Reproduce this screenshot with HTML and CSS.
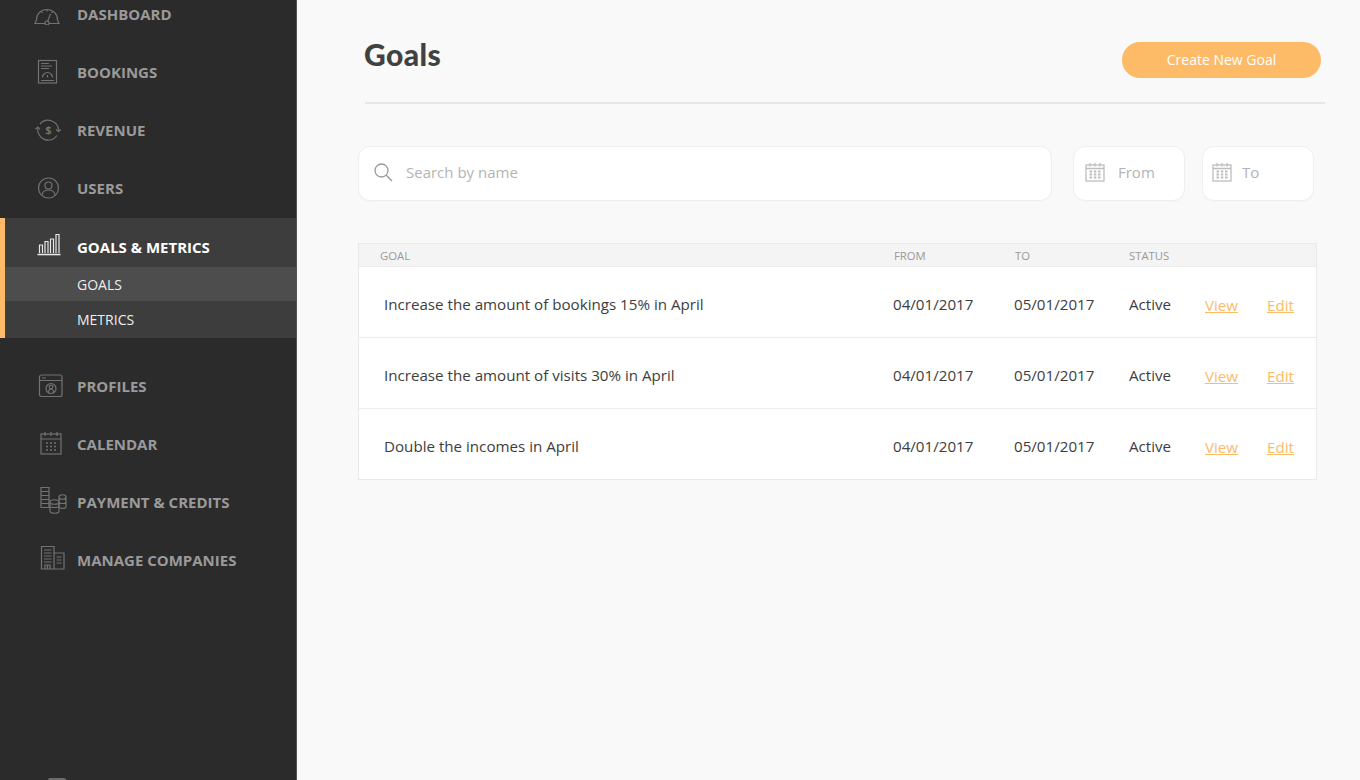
FILE: index.html
```html
<!DOCTYPE html>
<html lang="en">
<head>
<meta charset="utf-8">
<title>Goals</title>
<link rel="stylesheet" href="styles.css">
</head>
<body>
<div class="app">
  <aside class="sidebar">
    <nav class="nav">
      <a class="nav-item"><span class="ico"><svg width="38" height="22" viewBox="0 0 38 22"><path d="M7.500 17C7.500 10.500 12 6.500 18 6.500S28.500 10.500 28.500 17"/><path d="M7.500 17L6 20.500h10M20 20.500H30L28.500 17"/><path d="M18 6.500v2M12.500 8.500l1 1.500M23.500 8.500l-1 1.500"/><path d="M21.500 11L18.500 18.500"/><circle cx="18" cy="20" r="2"/></svg></span><span>DASHBOARD</span></a>
      <a class="nav-item"><span class="ico"><svg width="38" height="26" viewBox="0 0 38 26"><rect x="9.500" y="1.500" width="18" height="22.500"/><path d="M12 4.500h8M12 7h11M12 9.500h8M12 21.500h13"/><path d="M13.500 18.500a5 5 0 0 1 10 0M18.500 16v2.500"/></svg></span><span>BOOKINGS</span></a>
      <a class="nav-item"><span class="ico"><svg width="38" height="24" viewBox="0 0 38 24"><path d="M11 6A10.500 10.500 0 0 1 29.500 13.500M28 17.500A10.500 10.500 0 0 1 9 9.500"/><path d="M6.500 11l2.500-2 2 2.500M27 11.500l2.500 2 2.500-2"/><text class="ico-txt" x="19.500" y="16">$</text></svg></span><span>REVENUE</span></a>
      <a class="nav-item"><span class="ico"><svg width="38" height="24" viewBox="0 0 38 24"><circle cx="19.500" cy="12" r="10"/><circle cx="19.500" cy="9.500" r="3.500"/><path d="M13 19c.5-3.500 3-5 6.500-5s6 1.500 6.500 5"/></svg></span><span>USERS</span></a>

      <div class="group">
        <a class="nav-item active"><span class="ico"><svg width="38" height="24" viewBox="0 0 38 24"><path class="thick" d="M8.500 21.500h23"/><path d="M10.500 20v-8h3v8M16 20V8.500h3V20M21.500 20V6h3v14M27 20V1.500h3V20"/></svg></span><span>GOALS &amp; METRICS</span></a>
        <a class="sub sub-current">GOALS</a>
        <a class="sub sub-last">METRICS</a>
      </div>

      <a class="nav-item after-group"><span class="ico ico-shift"><svg width="38" height="26" viewBox="0 0 38 26"><rect x="7.500" y="2" width="22.500" height="21.500" rx="2"/><path d="M7.500 7.500H30M10 5h4"/><circle cx="19" cy="15.500" r="5"/><circle cx="19" cy="14" r="1.800"/><path d="M16.500 19c.3-2 1-3 2.500-3s2.200 1 2.500 3"/></svg></span><span>PROFILES</span></a>
      <a class="nav-item"><span class="ico ico-shift"><svg width="38" height="26" viewBox="0 0 38 26"><rect x="9" y="3" width="20" height="20"/><path d="M9 8h20M13 1v4M19 1v4M25 1v4"/><path class="dots" d="M14 12h2M18 12h2M22 12h2M14 15.500h2M18 15.500h2M22 15.500h2M14 19h2M18 19h2M22 19h2"/></svg></span><span>CALENDAR</span></a>
      <a class="nav-item"><span class="ico ico-shift ico-up"><svg width="38" height="30" viewBox="0 0 38 30"><path d="M9 2.500h8v20H9zM9 6.500h8M9 10.500h8M9 14.500h8M9 18.500h8"/><path d="M18 17c0 3 9 3 9 0s-9-3-9 0zM18 17v9c0 3 9 3 9 0v-9M18 21c0 2 9 2 9 0"/><path d="M27 12c0 3 7 3 7 0s-7-3-7 0zM27 12v10c0 1.500 7 2 7 0V12M27 17c0 2 7 2 7 0"/></svg></span><span>PAYMENT &amp; CREDITS</span></a>
      <a class="nav-item"><span class="ico ico-shift ico-up"><svg width="38" height="26" viewBox="0 0 38 26"><path d="M9.500 24V1.500h12.500V24zM22 8h10v16H22z"/><path d="M12 5h7.500M12 8h7.500M12 11h7.500M12 14h7.500M12 17h7.500M24.500 12h5M24.500 15h5M24.500 18h5M13 24v-4h5v4M15.500 20v4"/></svg></span><span>MANAGE COMPANIES</span></a>
    </nav>
    <div class="sidebar-peek"></div>
  </aside>

  <main class="main">
    <header class="head">
      <h1 class="title">Goals</h1>
      <a class="btn">Create New Goal</a>
    </header>

    <section class="filters">
      <div class="field field-search">
        <svg class="field-ico" width="20" height="20" viewBox="0 0 20 20"><circle cx="8.500" cy="8.500" r="6.500"/><path d="M13.300 13.300L19 19"/></svg>
        <span class="placeholder">Search by name</span>
      </div>
      <div class="field field-date field-from">
        <svg class="field-ico cal" width="20" height="20" viewBox="0 0 20 20"><rect x="1" y="3" width="18" height="16"/><path d="M1 6.500h18M5 1v3.500M10 1v3.500M15 1v3.500"/><path class="cal-dots" d="M4.500 9.500h2.500M8.800 9.500h2.500M13 9.500h2.500M4.500 12.500h2.500M8.800 12.500h2.500M13 12.500h2.500M4.500 15.500h2.500M8.800 15.500h2.500M13 15.500h2.500"/></svg>
        <span class="placeholder">From</span>
      </div>
      <div class="field field-date field-to">
        <svg class="field-ico cal" width="20" height="20" viewBox="0 0 20 20"><rect x="1" y="3" width="18" height="16"/><path d="M1 6.500h18M5 1v3.500M10 1v3.500M15 1v3.500"/><path class="cal-dots" d="M4.500 9.500h2.500M8.800 9.500h2.500M13 9.500h2.500M4.500 12.500h2.500M8.800 12.500h2.500M13 12.500h2.500M4.500 15.500h2.500M8.800 15.500h2.500M13 15.500h2.500"/></svg>
        <span class="placeholder">To</span>
      </div>
    </section>

    <section class="table">
      <div class="row row-head">
        <span class="c-goal">GOAL</span><span>FROM</span><span class="c-to">TO</span><span>STATUS</span>
      </div>
      <div class="row row-body">
        <span class="c-goal">Increase the amount of bookings 15% in April</span><span class="c-date">04/01/2017</span><span>05/01/2017</span><span>Active</span><a class="link">View</a><a class="link link-edit">Edit</a>
      </div>
      <div class="row row-body">
        <span class="c-goal">Increase the amount of visits 30% in April</span><span class="c-date">04/01/2017</span><span>05/01/2017</span><span>Active</span><a class="link">View</a><a class="link link-edit">Edit</a>
      </div>
      <div class="row row-body">
        <span class="c-goal">Double the incomes in April</span><span class="c-date">04/01/2017</span><span>05/01/2017</span><span>Active</span><a class="link">View</a><a class="link link-edit">Edit</a>
      </div>
    </section>
  </main>
</div>
</body>
</html>
```
FILE: styles.css
```css
* { box-sizing: border-box; }
html, body { margin: 0; height: 100%; overflow: hidden; }
body { font-family: "Open Sans", "Liberation Sans", sans-serif; background: #f9f9f9; color: #3f3f3f; }
.app { display: flex; height: 780px; width: 1360px; }

.sidebar { width: 297px; flex: none; height: 780px; background: #2b2b2b; border-right: 1px solid #555; overflow: hidden; display: flex; flex-direction: column; justify-content: space-between; }
.nav { margin-top: -15px; display: flex; flex-direction: column; }
.nav-item { height: 58px; display: flex; align-items: center; font-size: 15px; font-weight: 700; color: #9a9a9a; padding-left: 29px; }
.ico { width: 38px; margin-right: 10px; display: flex; justify-content: center; align-items: center; }
.ico svg { display: block; fill: none; stroke: #727272; stroke-width: 1.2; }
.ico-txt { font-family: "Open Sans", sans-serif; font-size: 11px; font-weight: 700; fill: #727272; stroke: none; text-anchor: middle; }
.ico .dots { stroke-width: 1.6; }
.ico-shift svg { transform: translateX(3px); }
.ico-up svg { margin-top: -4px; }

.group { background: #3d3d3d; border-left: 5px solid #fdbb68; margin-top: 1px; height: 120px; display: flex; flex-direction: column; }
.nav-item.active { color: #fff; height: 49px; padding-left: 24px; padding-top: 8px; }
.nav-item.active .ico svg { stroke: #e8e8e8; margin-top: -3px; }
.nav-item.active .thick { stroke-width: 1.6; }
.sub { font-size: 14px; color: #eee; padding-left: 72px; display: flex; align-items: center; height: 35px; }
.sub-current { background: #4d4d4d; height: 34px; }
.sub-last { height: 37px; }
.after-group { margin-top: 19px; }

.sidebar-peek { width: 18px; height: 2px; margin: 0 0 0 48px; background: #6b6b6b; border-radius: 3px 3px 0 0; }

.main { flex: 1; min-width: 0; padding: 0 43px 0 61px; display: flex; flex-direction: column; }
.head { margin: 0 -8px 0 7px; height: 104px; border-bottom: 2px solid #e6e6e6; display: flex; justify-content: space-between; align-items: flex-start; padding: 42px 4px 0 0; }
.title { margin: -6px 0 0 -1px; font-family: Lato, sans-serif; font-weight: 900; font-size: 30px; line-height: 36px; letter-spacing: .4px; color: #414141; }
.btn { width: 199px; height: 36px; padding-bottom: 2px; border-radius: 18px; background: #fdbb68; color: #fff; font-size: 14px; display: flex; align-items: center; justify-content: center; }

.filters { margin-top: 42px; display: flex; height: 55px; }
.field { height: 55px; padding-bottom: 3px; background: #fff; border: 1px solid #efefef; border-radius: 12px; display: flex; align-items: center; box-shadow: 0 1px 1px rgba(0,0,0,.02); }
.field-search { width: 694px; padding-left: 14px; }
.field-search .field-ico { margin-right: 13px; }
.field-date { width: 112px; padding-left: 11px; }
.field-date .field-ico { margin-right: 12px; }
.field-from { margin-left: 21px; }
.field-from .field-ico { margin-right: 13px; }
.field-to { margin-left: 17px; padding-left: 9px; }
.field-to .field-ico { margin-right: 10px; }
.field-ico { fill: none; stroke: #999; stroke-width: 1.3; flex: none; }
.cal { stroke: #bdbdbd; }
.cal-dots { stroke-width: 1.8; }
.placeholder { color: #b4b4b4; font-size: 15px; }

.table { margin-top: 42px; width: 959px; background: #fff; border: 1px solid #e9e9e9; }
.row { display: grid; grid-template-columns: 535px 120px 115px 76px 63px 1fr; align-items: center; }
.row-head { height: 23px; background: #f4f4f4; border-bottom: 1px solid #ececec; font-size: 11.3px; color: #999; }
.row-head .c-goal { padding-left: 21px; }
.row-head .c-to { margin-left: 1px; }
.row-body { height: 71px; padding-top: 4px; font-size: 15.15px; color: #3d3d3d; border-bottom: 1px solid #ececec; }
.row-body:last-child { border-bottom: 0; height: 70px; }
.row-body .c-goal { padding-left: 25px; }
.c-date { margin-left: -1px; }
.link { color: #fdbb68; text-decoration: underline; position: relative; top: 1px; }
.link-edit { margin-left: -1px; }
```
